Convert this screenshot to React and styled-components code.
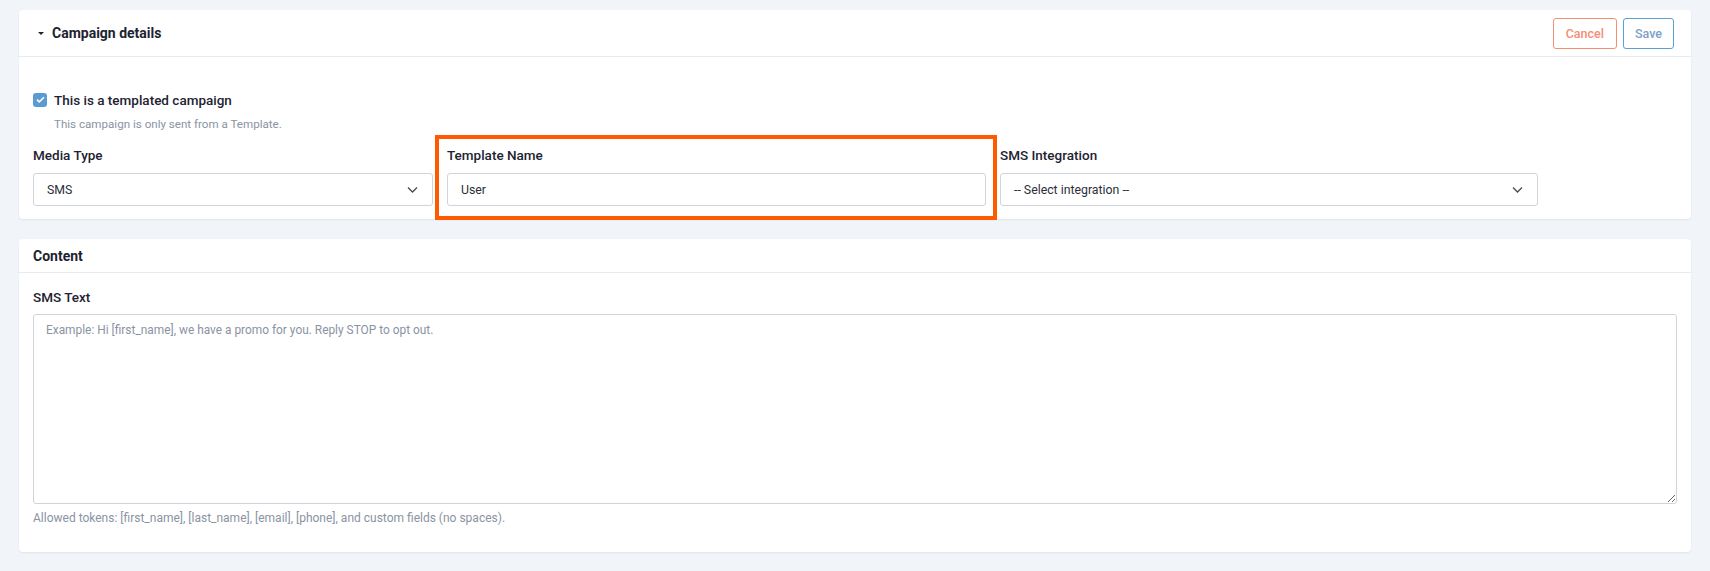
import React from "react";
import styled, { createGlobalStyle } from "styled-components";

const GlobalStyle = createGlobalStyle`
  * { box-sizing: border-box; }
  body {
    margin: 0;
    background: #f1f4f8;
    font-family: Roboto, "Liberation Sans", sans-serif;
    color: #212529;
  }
`;

const Page = styled.div`
  display: flex;
  flex-direction: column;
  gap: 20px;
  padding: 10px 19px 20px;
`;

const Card = styled.section`
  background: #fff;
  border-radius: 4px;
  box-shadow: 0 1px 2px rgba(30, 41, 59, 0.08);
`;

const CardHeader = styled.div`
  display: flex;
  align-items: center;
  justify-content: space-between;
  height: ${(p) => p.$h}px;
  padding: 0 17px 0 ${(p) => (p.$caret ? 19 : 14)}px;
  border-bottom: 1px solid #e7eaee;
`;

const Title = styled.h3`
  display: flex;
  align-items: center;
  gap: 8px;
  margin: 0;
  font-size: 14px;
  font-weight: 700;
  color: #1d2330;
`;

const Caret = styled.span`
  width: 0;
  height: 0;
  border-left: 3px solid transparent;
  border-right: 3px solid transparent;
  border-top: 3.5px solid #1d2330;
`;

const Actions = styled.div`
  display: flex;
  gap: 6px;
`;

const Button = styled.button`
  height: 31px;
  padding: 0 ${(p) => p.$px}px;
  border-radius: 3px;
  background: #fff;
  font-family: inherit;
  font-size: 12.5px;
  font-weight: 500;
  border: 1px solid ${(p) => (p.$tone === "danger" ? "#f39072" : "#5c9fd2")};
  color: ${(p) => (p.$tone === "danger" ? "#f58d78" : "#7d9fcb")};
`;

const Body = styled.div`
  padding: ${(p) => p.$pad};
`;

const CheckRow = styled.label`
  display: flex;
  align-items: center;
  gap: 7px;
  height: 15px;
  font-size: 13.5px;
  font-weight: 500;
  color: #1d2330;
`;

const Box = styled.span`
  display: flex;
  align-items: center;
  justify-content: center;
  width: 14px;
  height: 14px;
  border-radius: 3px;
  background: #5c9bd1;
`;

const Hint = styled.p`
  margin: ${(p) => p.$m};
  font-size: ${(p) => p.$size || 12}px;
  line-height: 16px;
  color: #8a93a3;
`;

const FieldGrid = styled.div`
  display: grid;
  grid-template-columns: 400px 539px 538px;
  column-gap: 14px;
  margin-top: 13px;
`;

const Field = styled.div`
  position: relative;
  display: flex;
  flex-direction: column;
  gap: ${(p) => p.$gap || 8}px;
`;

const Label = styled.div`
  font-size: 13.5px;
  line-height: 20px;
  font-weight: 500;
  color: #1d2330;
`;

const Control = styled.div`
  position: relative;
  display: flex;
  align-items: center;
  height: 33px;
  padding: 0 13px;
  border: 1px solid #cfd4dc;
  border-radius: 3px;
  font-size: 12.3px;
  color: #2a2f38;
  background: #fff;
`;

const Chevron = styled.svg`
  position: absolute;
  right: 14px;
  top: 50%;
  transform: translateY(-50%);
`;

const Highlight = styled.span`
  position: absolute;
  top: -10px;
  bottom: -14px;
  left: -12px;
  right: -11px;
  border: 4px solid #ff5a00;
  pointer-events: none;
`;

const TextArea = styled.textarea`
  display: block;
  width: 100%;
  height: 190px;
  padding: 8px 12px;
  border: 1px solid #cfd4dc;
  border-radius: 3px;
  font-family: inherit;
  font-size: 11.9px;
  color: #2a2f38;
  resize: vertical;
  &::placeholder {
    color: #8a93a3;
  }
`;

function Select({ value }) {
  return (
    <Control>
      {value}
      <Chevron width="11" height="7" viewBox="0 0 11 7" fill="none">
        <path d="M1 1l4.5 4.5L10 1" stroke="#444b55" strokeWidth="1.3" />
      </Chevron>
    </Control>
  );
}

export default function App() {
  return (
    <>
      <GlobalStyle />
      <Page>
        <Card>
          <CardHeader $h={47} $caret>
            <Title>
              <Caret />
              Campaign details
            </Title>
            <Actions>
              <Button $tone="danger" $px={12}>Cancel</Button>
              <Button $px={11}>Save</Button>
            </Actions>
          </CardHeader>
          <Body $pad="35px 14px 13px">
            <CheckRow>
              <Box>
                <svg width="9" height="7" viewBox="0 0 9 7" fill="none">
                  <path d="M1 3.6l2.3 2.2L8 1.2" stroke="#fff" strokeWidth="1.6" />
                </svg>
              </Box>
              This is a templated campaign
            </CheckRow>
            <Hint $m="9px 0 0 21px" $size={11.6}>
              This campaign is only sent from a Template.
            </Hint>
            <FieldGrid>
              <Field>
                <Label>Media Type</Label>
                <Select value="SMS" />
              </Field>
              <Field>
                <Label>Template Name</Label>
                <Control>User</Control>
                <Highlight />
              </Field>
              <Field>
                <Label>SMS Integration</Label>
                <Select value="-- Select integration --" />
              </Field>
            </FieldGrid>
          </Body>
        </Card>

        <Card>
          <CardHeader $h={34}>
            <Title>Content</Title>
          </CardHeader>
          <Body $pad="14px 14px 26px">
            <Field $gap={7}>
              <Label>SMS Text</Label>
              <TextArea placeholder="Example: Hi [first_name], we have a promo for you. Reply STOP to opt out." />
            </Field>
            <Hint $m="6px 0 0">
              Allowed tokens: [first_name], [last_name], [email], [phone], and custom fields (no spaces).
            </Hint>
          </Body>
        </Card>
      </Page>
    </>
  );
}
